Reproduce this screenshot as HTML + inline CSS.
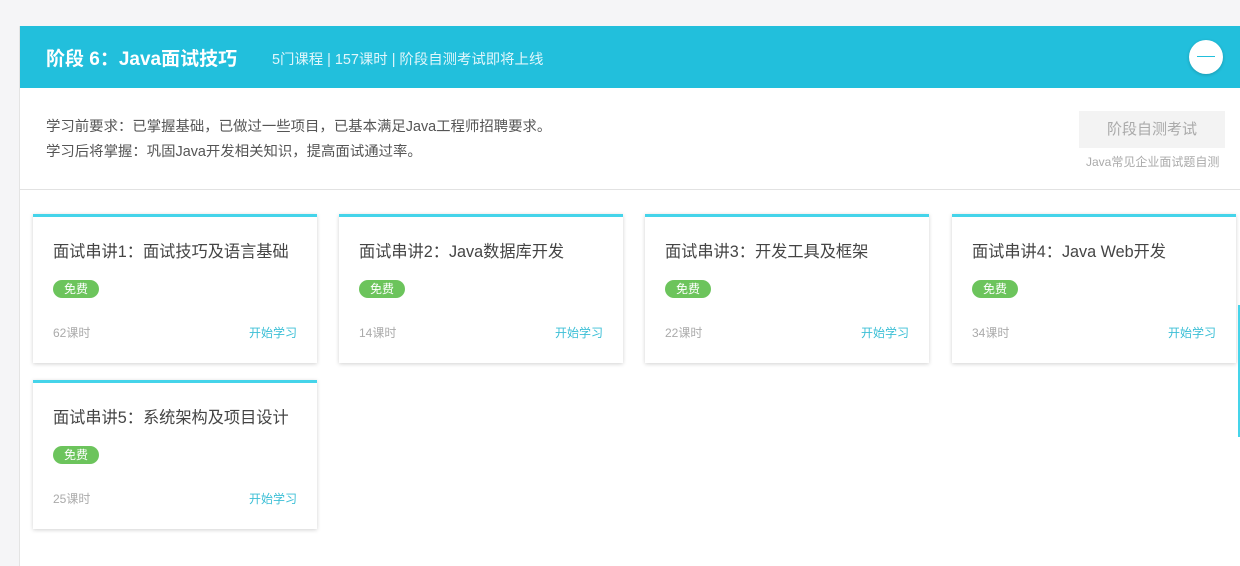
<!DOCTYPE html>
<html><head><meta charset="utf-8"><style>
*{margin:0;padding:0;box-sizing:border-box}
body{width:1240px;height:549px;background:#f5f5f7;font-family:"Liberation Sans","Noto Sans CJK SC",sans-serif;overflow:hidden;position:relative}
.wrap{position:absolute;left:19px;top:26px;width:1230px;height:540px;background:#fff;border-left:1px solid #e4e4e4}
.hd{position:absolute;left:0;top:0;right:0;height:62px;background:#22bfdc;color:#fff}
.hd .t{position:absolute;left:26px;top:18px;font-size:19px;font-weight:bold}
.hd .s{position:absolute;left:252px;top:22px;font-size:14.4px;color:#e0f6fb}
.hd .c{position:absolute;left:1169px;top:14px;width:34px;height:34px;border-radius:50%;background:#fff;box-shadow:0 1px 3px rgba(0,0,0,.2)}
.hd .c:after{content:"";position:absolute;left:8px;top:16px;width:18px;height:1px;background:#22bfdc}
.req{position:absolute;left:26px;font-size:14.4px;color:#555}
.btn{position:absolute;left:1059px;top:85px;width:146px;height:37px;background:#f3f3f3;color:#aaa;font-size:15px;text-align:center;line-height:37px}
.bs{position:absolute;left:1066px;top:127px;font-size:12px;color:#aaa}
.hr{position:absolute;left:0;right:0;top:163px;height:1px;background:#e2e2e2}
.card{position:absolute;width:284px;height:149px;background:#fff;border-top:3px solid #45d4ea;box-shadow:0 1px 4px rgba(0,0,0,.18)}
.card .n{position:absolute;left:20px;top:21px;font-size:16.2px;color:#444}
.card .b{position:absolute;left:20px;top:63px;width:46px;height:18px;border-radius:9px;background:#6cc45c;color:#fff;font-size:12px;text-align:center;line-height:18px}
.card .h{position:absolute;left:20px;top:107px;font-size:12px;color:#aaa}
.card .g{position:absolute;right:20px;top:107px;font-size:12px;color:#3bbfd6}
</style></head><body>
<div class="wrap">
<div class="hd"><div class="t">阶段 6：Java面试技巧</div><div class="s">5门课程 | 157课时 | 阶段自测考试即将上线</div><div class="c"></div></div>
<div class="req" style="top:89px">学习前要求：已掌握基础，已做过一些项目，已基本满足Java工程师招聘要求。</div>
<div class="req" style="top:114px">学习后将掌握：巩固Java开发相关知识，提高面试通过率。</div>
<div class="btn">阶段自测考试</div>
<div class="bs">Java常见企业面试题自测</div>
<div class="hr"></div>
</div>
<div class="card" style="left:33px;top:214px"><div class="n">面试串讲1：面试技巧及语言基础</div><div class="b">免费</div><div class="h">62课时</div><div class="g">开始学习</div></div>
<div class="card" style="left:339px;top:214px"><div class="n">面试串讲2：Java数据库开发</div><div class="b">免费</div><div class="h">14课时</div><div class="g">开始学习</div></div>
<div class="card" style="left:645px;top:214px"><div class="n">面试串讲3：开发工具及框架</div><div class="b">免费</div><div class="h">22课时</div><div class="g">开始学习</div></div>
<div class="card" style="left:952px;top:214px"><div class="n">面试串讲4：Java Web开发</div><div class="b">免费</div><div class="h">34课时</div><div class="g">开始学习</div></div>
<div class="card" style="left:33px;top:380px"><div class="n">面试串讲5：系统架构及项目设计</div><div class="b">免费</div><div class="h">25课时</div><div class="g">开始学习</div></div>
<div style="position:absolute;left:1238px;top:305px;width:2px;height:132px;background:#45d4ea"></div>
</body></html>
